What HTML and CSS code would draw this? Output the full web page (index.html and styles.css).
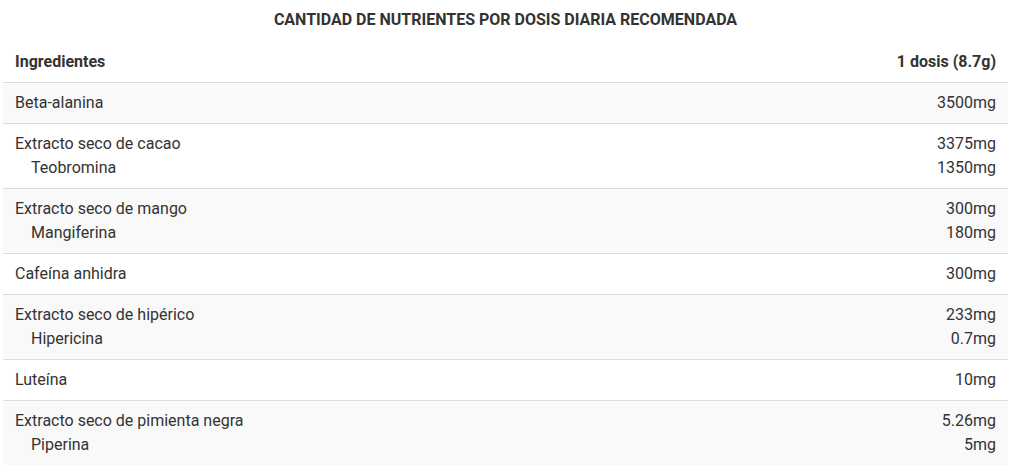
FILE: index.html
```html
<!DOCTYPE html>
<html lang="es">
<head>
<meta charset="utf-8">
<title>Nutrientes</title>
<link rel="stylesheet" href="styles.css">
</head>
<body>
<div class="wrap">
  <h2 class="title">CANTIDAD DE NUTRIENTES POR DOSIS DIARIA RECOMENDADA</h2>
  <table class="nutri">
    <thead>
      <tr><th>Ingredientes</th><th class="r">1 dosis (8.7g)</th></tr>
    </thead>
    <tbody>
      <tr><td>Beta-alanina</td><td class="r">3500mg</td></tr>
      <tr><td>Extracto seco de cacao<br><span class="sub">Teobromina</span></td><td class="r">3375mg<br>1350mg</td></tr>
      <tr><td>Extracto seco de mango<br><span class="sub">Mangiferina</span></td><td class="r">300mg<br>180mg</td></tr>
      <tr><td>Cafeína anhidra</td><td class="r">300mg</td></tr>
      <tr><td>Extracto seco de hipérico<br><span class="sub">Hipericina</span></td><td class="r">233mg<br>0.7mg</td></tr>
      <tr><td>Luteína</td><td class="r">10mg</td></tr>
      <tr><td>Extracto seco de pimienta negra<br><span class="sub">Piperina</span></td><td class="r">5.26mg<br>5mg</td></tr>
    </tbody>
  </table>
</div>
</body>
</html>
```
FILE: styles.css
```css
html, body {
  margin: 0;
  padding: 0;
  background: #fff;
}
body {
  font-family: Roboto, "Liberation Sans", sans-serif;
  color: #333;
  font-size: 16px;
  line-height: 24px;
}
.wrap {
  width: 1005px;
  margin-left: 3px;
  padding-top: 8px;
}
.title {
  margin: 0 0 10px;
  font-size: 16px;
  line-height: 24px;
  font-weight: 700;
  text-align: center;
  color: #333;
}
.nutri {
  width: 100%;
  border-collapse: collapse;
}
.nutri th, .nutri td {
  padding: 8px 12px;
  text-align: left;
  vertical-align: top;
  border-bottom: 1px solid #ddd;
}
.nutri th {
  font-weight: 700;
}
.nutri tbody tr:nth-child(odd) {
  background: #f9f9f9;
}
.nutri tbody tr:last-child td {
  border-bottom: none;
}
.nutri .r {
  text-align: right;
}
.sub {
  padding-left: 16px;
}
```
